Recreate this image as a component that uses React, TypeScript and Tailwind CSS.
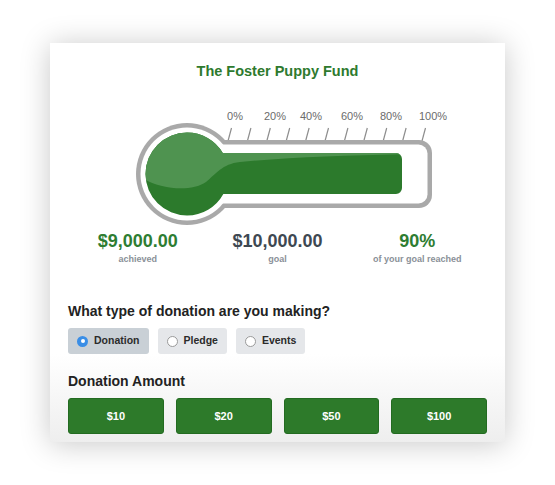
import React from 'react';

const ticks = Array.from({ length: 11 }, (_, i) => 178 + i * 19.4);
const labels = [
  { x: 185, t: '0%' },
  { x: 225, t: '20%' },
  { x: 261, t: '40%' },
  { x: 302, t: '60%' },
  { x: 341, t: '80%' },
  { x: 383, t: '100%' },
];

function Thermometer() {
  // coords are page x - 50, page y - 100
  const cx = 137;
  const cy = 74;
  return (
    <svg width="455" height="128" viewBox="0 0 455 128" className="block">
      <defs>
        <clipPath id="greenClip">
          <circle cx={cx} cy={cy} r="41.5" />
          <rect x={cx} y="53" width={352 - cx} height="41" rx="6" />
        </clipPath>
      </defs>
      {labels.map((l) => (
        <text
          key={l.t}
          x={l.x}
          y="20"
          textAnchor="middle"
          fontSize="11"
          fill="#6b6b6b"
          fontFamily="'Liberation Sans', Arial, sans-serif"
        >
          {l.t}
        </text>
      ))}
      {ticks.map((x, i) => (
        <line key={i} x1={x} y1="41" x2={x + 3.5} y2="28" stroke="#8d8d8d" strokeWidth="1.2" />
      ))}
      {/* gray outline */}
      <circle cx={cx} cy={cy} r="51" fill="#a9a9a9" />
      <rect x={cx} y="40" width={382 - cx} height="68" rx="13" fill="#a9a9a9" />
      {/* white inside */}
      <circle cx={cx} cy={cy} r="46.5" fill="#ffffff" />
      <rect x={cx} y="44.5" width={377.5 - cx} height="59" rx="9" fill="#ffffff" />
      {/* green mercury */}
      <g clipPath="url(#greenClip)">
        <rect x="80" y="20" width="300" height="110" fill="#2c7a2c" />
        <path
          d="M 80 20 L 360 20 L 360 54 C 300 55 240 57 190 62 C 172 64 166 74 156 82 C 146 89 128 90 112 86 C 100 83 92 78 84 74 Z"
          fill="#4f9350"
        />
      </g>
    </svg>
  );
}

function Radio({ label, selected }: { label: string; selected?: boolean }) {
  return (
    <div
      className={
        selected
          ? 'flex h-[26px] items-center gap-[6px] rounded-[3px] bg-[#c9d0d6] pl-[9px] pr-[9px]'
          : 'flex h-[26px] items-center gap-[6px] rounded-[3px] bg-[#e5e7ea] pl-[9px] pr-[9px]'
      }
    >
      {selected ? (
        <span className="flex h-[11px] w-[11px] items-center justify-center rounded-full bg-[#3a8ee6]">
          <span className="h-[4px] w-[4px] rounded-full bg-white" />
        </span>
      ) : (
        <span className="h-[11px] w-[11px] rounded-full border border-[#9a9a9a] bg-white" />
      )}
      <span className="text-[10.5px] font-bold text-[#2b2b2b]">{label}</span>
    </div>
  );
}

export default function App() {
  return (
    <div
      className="h-[485px] w-[555px] bg-white pl-[50px] pt-[43px]"
      style={{ fontFamily: "'Liberation Sans', Arial, sans-serif" }}
    >
      <div className="flex h-[399px] w-[455px] flex-col bg-gradient-to-b from-white from-[78%] to-[#eeeeee] shadow-[0_2px_28px_rgba(0,0,0,0.22)]">
        <h1 className="mt-[18px] text-center text-[14.5px] font-bold leading-[20px] text-[#2e7a2e]">
          The Foster Puppy Fund
        </h1>
        <div className="mt-[19px]">
          <Thermometer />
        </div>
        <div className="mx-[18px] mt-[2px] grid grid-cols-3">
          <div className="flex flex-col items-center">
            <span className="text-[18px] font-bold leading-[22px] text-[#2e7d32]">$9,000.00</span>
            <span className="mt-[1px] text-[9px] font-bold leading-[12px] text-[#8a9098]">achieved</span>
          </div>
          <div className="flex flex-col items-center">
            <span className="text-[18px] font-bold leading-[22px] text-[#3e4852]">$10,000.00</span>
            <span className="mt-[1px] text-[9px] font-bold leading-[12px] text-[#8a9098]">goal</span>
          </div>
          <div className="flex flex-col items-center">
            <span className="text-[18px] font-bold leading-[22px] text-[#2e7d32]">90%</span>
            <span className="mt-[1px] text-[9px] font-bold leading-[12px] text-[#8a9098]">
              of your goal reached
            </span>
          </div>
        </div>
        <div className="mx-[18px] mt-[37px]">
          <h2 className="text-[14px] font-bold leading-[18px] text-[#222]">
            What type of donation are you making?
          </h2>
          <div className="mt-[8px] flex gap-[9px]">
            <Radio label="Donation" selected />
            <Radio label="Pledge" />
            <Radio label="Events" />
          </div>
          <h2 className="mt-[18px] text-[14px] font-bold leading-[18px] text-[#222]">Donation Amount</h2>
          <div className="mt-[8px] grid grid-cols-4 gap-[12px]">
            {['$10', '$20', '$50', '$100'].map((a) => (
              <button
                key={a}
                className="flex h-[36px] items-center justify-center rounded-[3px] border border-[#236b21] bg-[#2d7a2a] text-[11px] font-bold text-white"
              >
                {a}
              </button>
            ))}
          </div>
        </div>
      </div>
    </div>
  );
}
